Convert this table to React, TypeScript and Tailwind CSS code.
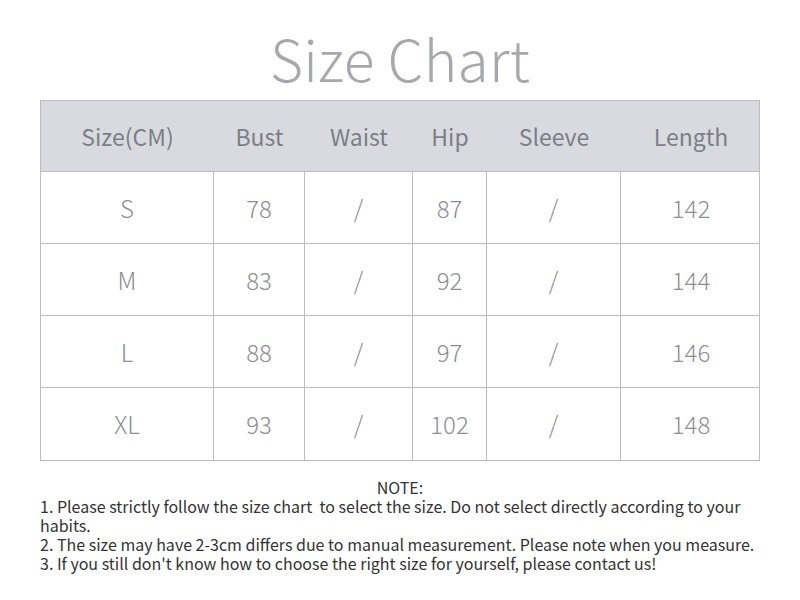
import React from "react";

const cols = ["Size(CM)", "Bust", "Waist", "Hip", "Sleeve", "Length"];
const rows = [
  ["S", "78", "/", "87", "/", "142"],
  ["M", "83", "/", "92", "/", "144"],
  ["L", "88", "/", "97", "/", "146"],
  ["XL", "93", "/", "102", "/", "148"],
];

const grid = "grid grid-cols-[173px_91px_108px_74px_134px_140px]";

function App() {
  return (
    <div
      className="w-[800px] h-[600px] bg-white flex flex-col items-center"
      style={{ fontFamily: '"Noto Sans CJK SC", "Noto Sans", sans-serif' }}
    >
      <h1 className="mt-[18px] h-[82px] text-[57px] leading-[78px] font-light text-[#a6a8ad] tracking-[0.3px]">
        Size Chart
      </h1>
      <div className="w-[720px] border border-[#bcbcbc]">
        <div className={`${grid} h-[71px] bg-[#d9dadf] border-b border-[#bcbcbc]`}>
          {cols.map((c) => (
            <div key={c} className="flex items-center justify-center text-[23px] text-[#7b7f87]">
              {c}
            </div>
          ))}
        </div>
        {rows.map((r, i) => (
          <div
            key={r[0]}
            className={`${grid} h-[72px] ${i < rows.length - 1 ? "border-b border-[#bcbcbc]" : "h-[71px]"}`}
          >
            {r.map((v, j) => (
              <div
                key={j}
                className={`flex items-center justify-center text-[24px] font-light text-[#8c8e93] ${
                  j < r.length - 1 ? "border-r border-[#bcbcbc]" : ""
                }`}
              >
                {v}
              </div>
            ))}
          </div>
        ))}
      </div>
      <div className="w-[720px] mt-[17px] text-[16px] leading-[19px] text-[#333333]">
        <div className="text-center">NOTE:</div>
        <div className="whitespace-pre-wrap">
          1. Please strictly follow the size chart  to select the size. Do not select directly according to your habits.
        </div>
        <div>2. The size may have 2-3cm differs due to manual measurement. Please note when you measure.</div>
        <div>3. If you still don't know how to choose the right size for yourself, please contact us!</div>
      </div>
    </div>
  );
}

export default App;
